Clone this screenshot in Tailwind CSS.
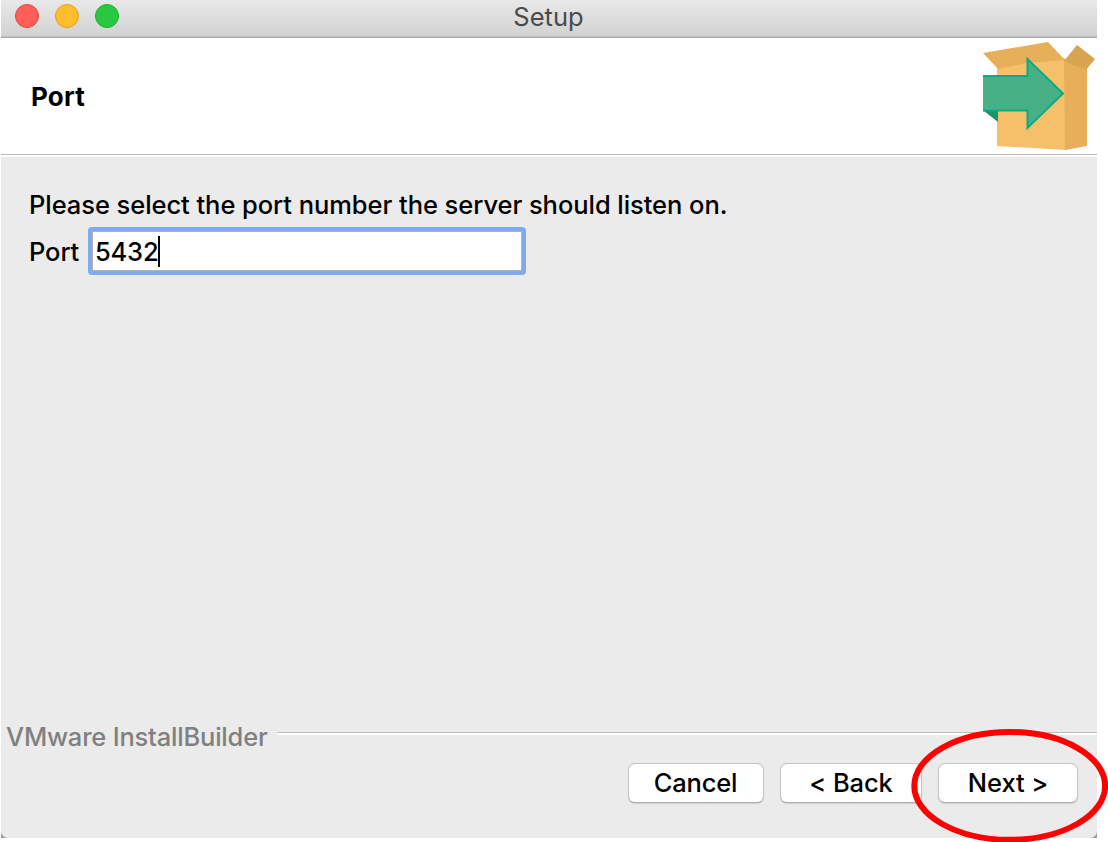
<!DOCTYPE html>
<html lang="en">
<head>
<meta charset="utf-8">
<title>Setup</title>
<script src="https://cdn.jsdelivr.net/npm/@tailwindcss/browser@4"></script>
</head>
<body class="bg-white overflow-hidden">
<div class="relative w-[1108px] h-[842px] overflow-hidden bg-white font-['Inter','Liberation_Sans',sans-serif] text-[25.5px] leading-8 font-medium text-black">
  <div class="ml-px w-[1096px] h-[838px] bg-[#9a9a9a]">
    <main class="flex flex-col w-full h-full rounded-b-[7px] overflow-hidden bg-[#ebebeb]">
      <header class="grid grid-cols-[1fr_auto_1fr] h-[38px] shrink-0 bg-linear-to-b from-[#e9e9e9] to-[#d1d1d1] border-b border-[#a9a9a9] shadow-[inset_0_-1px_0_#c0c0c0]">
        <div class="flex gap-4 pl-[14px] pt-1">
          <span class="size-6 rounded-full bg-[#ff5f57] border border-[#e2463f]"></span>
          <span class="size-6 rounded-full bg-[#ffbd2e] border border-[#e09e21]"></span>
          <span class="size-6 rounded-full bg-[#28c940] border border-[#1dad2b]"></span>
        </div>
        <h1 class="pt-px pr-px font-normal text-[#4a4a4a]"><span>Setup</span></h1>
      </header>
      <section class="flex justify-between h-[117px] shrink-0 bg-white border-b border-[#bdbdbd]">
        <h2 class="pl-[30px] pt-[43px] text-[26px] font-bold tracking-[0.2px]"><span>Port</span></h2>
        <svg class="w-[114px] h-[114px]" viewBox="983 38 114 114" aria-hidden="true">
          <path fill="#f6bf69" d="M997 62L1065 58L1066 150L997 146Z"/>
          <path fill="#e7af59" d="M1064 60L1087 69V146L1065 150Z"/>
          <path fill="#e7af59" d="M983 53L1048 42L1065 60L1027 63L998 69Z"/>
          <path fill="#d8a44f" d="M1064 61L1077 45L1095 59L1086 70Z"/>
          <path fill="#1d9268" d="M984 111H998V122Z"/>
          <path fill="#48b086" stroke="#08ab83" stroke-width="2" d="M984 76H1027.500V59L1063 93.500L1027.500 128V110.500H984Z"/>
          <path fill="#48b086" d="M983 77H987V109.500H983Z"/>
        </svg>
      </section>
      <section class="flex-1 border-t-2 border-white pl-7 pt-8">
        <p class="h-[38px] whitespace-nowrap tracking-[-0.06px]"><span>Please select the port number the server should listen on.</span></p>
        <div class="flex">
          <label class="w-[59px] pt-[9px] tracking-[-0.1px]"><span>Port</span></label>
          <div class="flex w-[438px] h-12 rounded-[4px] bg-[#7faaf0] p-1">
            <div class="flex items-center w-full bg-white border border-[#b0b0ae] pl-[2px]"><span class="pt-[2px] tracking-[-0.2px]">5432</span><i class="w-[2px] h-[31px] bg-black"></i></div>
          </div>
        </div>
      </section>
      <footer class="h-[118px] shrink-0 pl-[5px]">
        <div class="flex">
          <span class="w-[271px] pt-px whitespace-nowrap tracking-[-0.2px] text-[#808080]"><span>VMware InstallBuilder</span></span>
          <div class="flex-1 mt-3 h-[3px] bg-white border-t border-[#bdbdbd]"></div>
        </div>
        <div class="flex justify-end gap-4 pr-[19px] pt-[10px]">
          <button class="w-[136px] h-10 rounded-[7px] bg-white border border-[#c4c4c4] border-b-[#adadad] shadow-[0_1px_1px_#00000020] tracking-[-0.2px] pr-px"><span>Cancel</span></button>
          <button class="w-[142px] h-10 rounded-[7px] bg-white border border-[#c4c4c4] border-b-[#adadad] shadow-[0_1px_1px_#00000020] tracking-[-0.1px]"><span>&lt; Back</span></button>
          <button class="w-[140px] h-10 rounded-[7px] bg-white border border-[#c4c4c4] border-b-[#adadad] shadow-[0_1px_1px_#00000020] tracking-[-0.1px]"><span>Next &gt;</span></button>
        </div>
      </footer>
    </main>
  </div>
  <svg class="absolute left-0 top-0 w-[1108px] h-[842px] pointer-events-none" viewBox="0 0 1108 842" aria-hidden="true">
    <ellipse cx="1009.700" cy="785.900" rx="95.400" ry="53.900" fill="none" stroke="#ff0000" stroke-width="6"/>
  </svg>
</div>
</body>
</html>
